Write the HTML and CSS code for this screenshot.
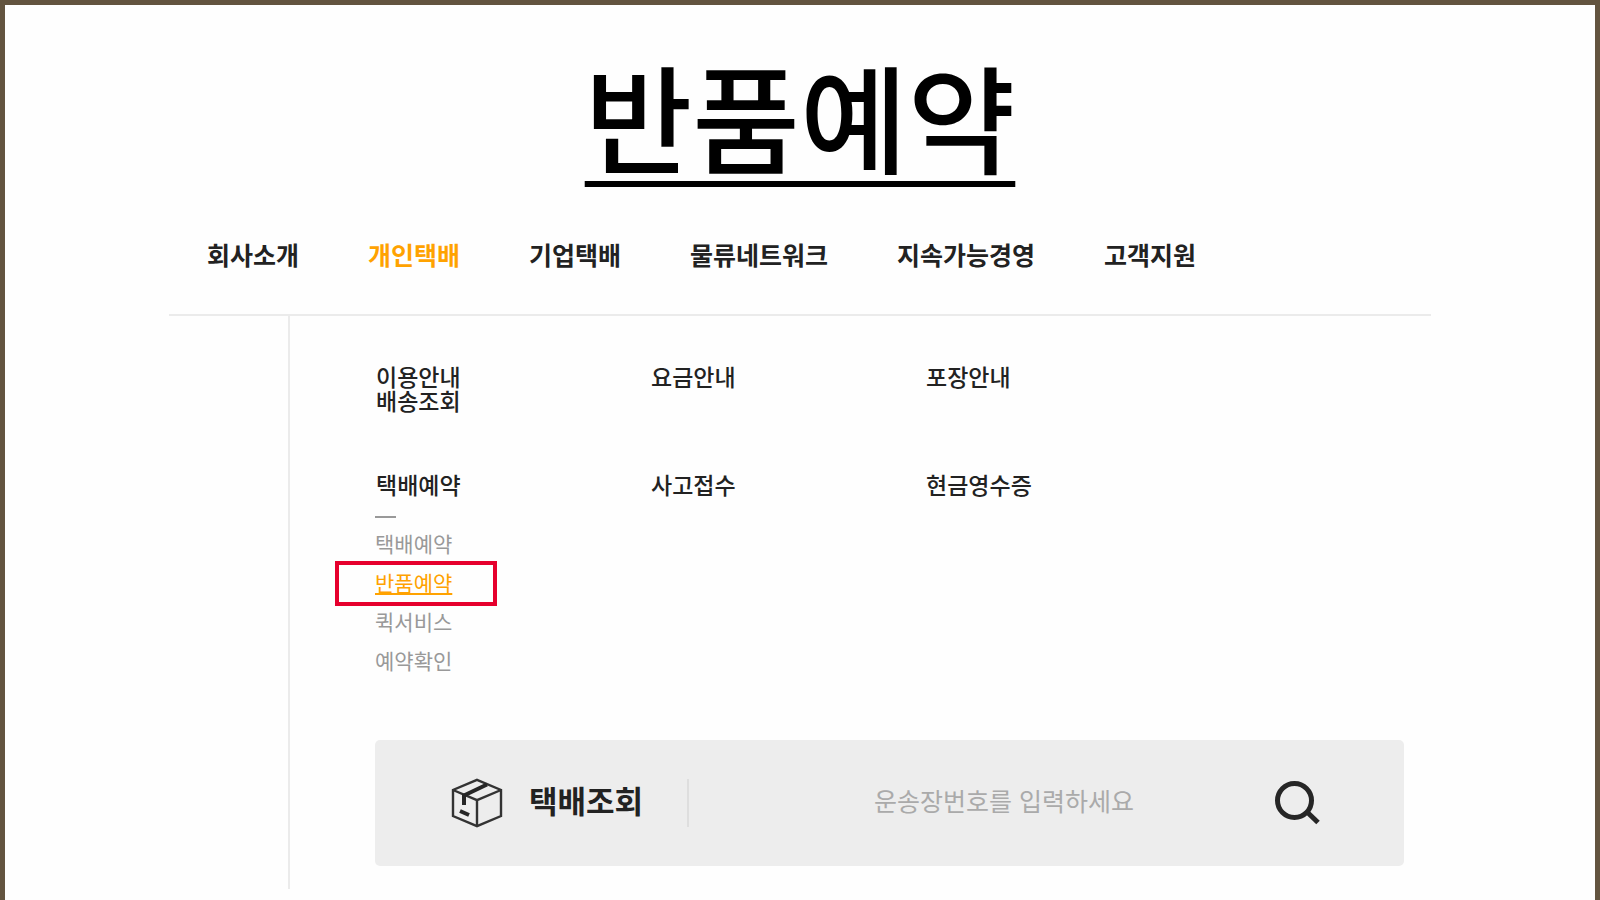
FILE: index.html
```html
<!DOCTYPE html>
<html lang="ko">
<head>
    <meta charset="UTF-8">
    <meta name="viewport" content="width=device-width, initial-scale=1.0">
    <title>반품예약</title>
    <link rel="stylesheet" href="styles.css">
</head>
<body>
    <div id="wrap">
        <h1 class="title">반품예약</h1>
        <nav class="gnb">
            <a href="#">회사소개</a>
            <a href="#" class="on">개인택배</a>
            <a href="#">기업택배</a>
            <a href="#">물류네트워크</a>
            <a href="#">지속가능경영</a>
            <a href="#">고객지원</a>
        </nav>
        <div class="sub">
            <div class="sub-inner">
                <div class="menu">
                    <div class="menu-item">
                        <a href="#">이용안내</a>
                        <a href="#">배송조회</a>
                    </div>
                    <div class="menu-item"><a href="#">요금안내</a></div>
                    <div class="menu-item"><a href="#">포장안내</a></div>
                    <div class="menu-item">
                        <a href="#">택배예약</a>
                        <ul class="depth">
                            <li><a href="#">택배예약</a></li>
                            <li class="on"><a href="#">반품예약</a></li>
                            <li><a href="#">퀵서비스</a></li>
                            <li><a href="#">예약확인</a></li>
                        </ul>
                    </div>
                    <div class="menu-item"><a href="#">사고접수</a></div>
                    <div class="menu-item"><a href="#">현금영수증</a></div>
                </div>
                <form class="search">
                    <svg class="box" viewBox="0 0 52 50" width="52" height="50" fill="none" stroke="#333" stroke-width="2.4">
                        <path d="M26 1.8L50 12V38L26 48.2L2 38V12Z"/>
                        <path d="M2 12L26 22.2L50 12M26 22V48"/>
                        <path d="M36 6.5L13 17.5V27" stroke="#262626" stroke-width="4"/>
                        <path d="M9 33L18 37" stroke="#262626" stroke-width="4"/>
                    </svg>
                    <label for="number">택배조회</label>
                    <input type="text" id="number" placeholder="운송장번호를 입력하세요">
                    <button type="button" aria-label="검색">
                        <svg viewBox="0 0 48 44" width="48" height="44" fill="none" stroke="#262626" stroke-width="5">
                            <circle cx="20.5" cy="19.5" r="17"/>
                            <path d="M32 30L44 41.5"/>
                        </svg>
                    </button>
                </form>
            </div>
        </div>
    </div>
</body>
</html>
```
FILE: styles.css
```css
* {
    box-sizing: border-box;
}
body {
    margin: 0;
    font-family: "Noto Sans CJK KR", sans-serif;
    color: #222;
    background: #fefefe;
}
a {
    color: inherit;
    text-decoration: none;
}
#wrap {
    min-height: 100vh;
    padding: 0 20px 11px;
    border: 5px solid #63543f;
    border-bottom: 0;
}
.title {
    margin: 0;
    padding-top: 29px;
    font-size: 117px;
    line-height: 160px;
    font-weight: 500;
    color: #000;
    text-align: center;
    text-decoration: underline;
    text-decoration-thickness: 6px;
    text-underline-offset: 16px;
    text-decoration-skip-ink: none;
}
.gnb {
    display: flex;
    gap: 69px;
    max-width: 1262px;
    margin: 0 auto;
    padding: 42px 38px 41px;
    font-size: 25px;
    line-height: 37px;
    font-weight: 700;
    border-bottom: 2px solid #ebebeb;
}
.gnb .on {
    color: #ffa200;
}
.sub {
    max-width: 1262px;
    margin: 0 auto;
    padding-left: 119px;
}
.sub-inner {
    padding: 48px 27px 23px 85px;
    border-left: 2px solid #ebebeb;
}
.menu {
    display: grid;
    grid-template-columns: repeat(3, 275px);
    row-gap: 60px;
    font-size: 23px;
    line-height: 24px;
    font-weight: 500;
}
.menu-item > a {
    display: block;
    padding-left: 1px;
}
.depth {
    margin: 0;
    padding: 0;
    list-style: none;
    font-size: 21px;
    line-height: 39px;
    font-weight: 400;
    color: #999;
}
.depth::before {
    content: "";
    display: block;
    width: 21px;
    height: 2px;
    margin: 20px 0 6px;
    background: #999;
}
.depth .on {
    position: relative;
    color: #ffa200;
    text-decoration: underline;
}
/* 현재 메뉴 표시 */
.depth .on::after {
    content: "";
    position: absolute;
    left: -40px;
    top: -2px;
    width: 162px;
    height: 45px;
    border: 4px solid #e6002d;
    box-sizing: border-box;
}
.search {
    display: flex;
    align-items: center;
    height: 126px;
    margin-top: 60px;
    padding: 0 82px 0 76px;
    background: #ededed;
    border-radius: 5px;
}
.search label {
    padding: 0 44px 6px 26px;
    font-size: 31px;
    line-height: 42px;
    font-weight: 700;
    border-right: 2px solid #dedede;
}
.search input {
    flex: 1;
    min-width: 0;
    margin-left: 45px;
    padding: 0 0 6px;
    border: 0;
    background: none;
    font-family: inherit;
    font-size: 25px;
    font-weight: 400;
    text-align: center;
}
.search input::placeholder {
    color: #aaa;
}
.search button {
    padding: 0;
    border: 0;
    background: none;
    cursor: pointer;
}
.search svg {
    display: block;
}
```
